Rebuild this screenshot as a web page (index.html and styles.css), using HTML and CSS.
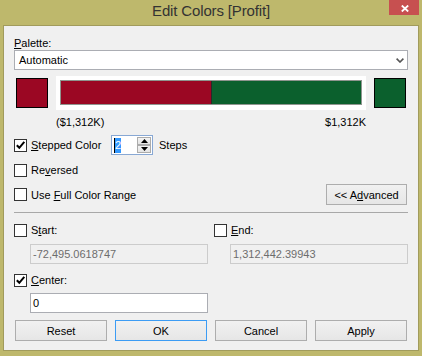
FILE: index.html
```html
<!DOCTYPE html>
<html>
<head>
<meta charset="utf-8">
<link rel="stylesheet" href="styles.css">
</head>
<body>
<div class="window">
  <div class="titlebar">
    <span class="tb-spacer"></span>
    <div class="title">Edit Colors [Profit]</div>
    <div class="tb-right">
      <div class="close">
        <svg width="8" height="7" viewBox="0 0 8 7"><path d="M0.8 0.5 L7.2 6.5 M7.2 0.5 L0.8 6.5" stroke="#fff" stroke-width="1.8" fill="none"/></svg>
      </div>
    </div>
  </div>
  <div class="client">
    <div class="label"><u>P</u>alette:</div>
    <div class="select">
      <span>Automatic</span>
      <svg class="chev" width="8" height="5" viewBox="0 0 8 5"><path d="M0.6 0.6 L4 4 L7.4 0.6" stroke="#555" stroke-width="1.6" fill="none"/></svg>
    </div>
    <div class="color-row">
      <div class="swatch red"></div>
      <div class="bar-wrap">
        <div class="bar"><div class="half red"></div><div class="divider"></div><div class="half green"></div></div>
      </div>
      <div class="swatch green"></div>
    </div>
    <div class="range-labels"><span>($1,312K)</span><span>$1,312K</span></div>
    <div class="row stepped-row">
      <span class="cb checked"><svg width="11" height="11" viewBox="0 0 11 11"><path d="M1.8 5.2 L4.3 7.8 L9.3 1.8" stroke="#000" stroke-width="2" fill="none"/></svg></span>
      <span class="stepped-label"><u>S</u>tepped Color</span>
      <div class="spin">
        <div class="spin-text"><span class="caret"></span><span class="sel">2</span></div>
        <div class="spin-btns">
          <div class="spin-btn"><svg width="7" height="4" viewBox="0 0 7 4"><path d="M0 4 L3.5 0 L7 4 Z" fill="#000"/></svg></div>
          <div class="spin-btn"><svg width="7" height="4" viewBox="0 0 7 4"><path d="M0 0 L3.5 4 L7 0 Z" fill="#000"/></svg></div>
        </div>
      </div>
      <span class="steps">Steps</span>
    </div>
    <div class="row reversed-row">
      <span class="cb"></span><span>Re<u>v</u>ersed</span>
    </div>
    <div class="row full-row">
      <div class="row-left"><span class="cb"></span><span>Use <u>F</u>ull Color Range</span></div>
      <div class="btn adv-btn">&lt;&lt; A<u>d</u>vanced</div>
    </div>
    <div class="separator"></div>
    <div class="range-grid">
      <div class="row cell-row"><span class="cb"></span><span>S<u>t</u>art:</span></div>
      <div class="row cell-row"><span class="cb"></span><span><u>E</u>nd:</span></div>
      <div class="field disabled">-72,495.0618747</div>
      <div class="field disabled">1,312,442.39943</div>
    </div>
    <div class="row center-row">
      <span class="cb checked"><svg width="11" height="11" viewBox="0 0 11 11"><path d="M1.8 5.2 L4.3 7.8 L9.3 1.8" stroke="#000" stroke-width="2" fill="none"/></svg></span>
      <span><u>C</u>enter:</span>
    </div>
    <div class="field center-field">0</div>
    <div class="buttons">
      <div class="btn">Reset</div>
      <div class="btn default">OK</div>
      <div class="btn">Cancel</div>
      <div class="btn">Apply</div>
    </div>
  </div>
</div>
</body>
</html>
```
FILE: styles.css
```css
* { box-sizing: border-box; }
html, body { margin: 0; padding: 0; }
body {
  width: 422px;
  height: 356px;
  overflow: hidden;
  font-family: "Liberation Sans", Arial, sans-serif;
  font-size: 11px;
  color: #000;
}
u { text-decoration: underline; text-underline-offset: 1px; }

.window {
  width: 422px;
  height: 356px;
  background: #BEB86C;
  display: flex;
  flex-direction: column;
  padding: 0 3px 5px 3px;
}

.titlebar {
  height: 25px;
  flex: none;
  display: grid;
  grid-template-columns: 1fr auto 1fr;
  align-items: start;
}
.title {
  font-size: 15px;
  line-height: 22px;
  color: #333;
  white-space: nowrap;
  letter-spacing: -0.15px;
}
.tb-right { display: flex; justify-content: flex-end; }
.close {
  width: 30px;
  height: 15px;
  background: #C75050;
  display: flex;
  align-items: center;
  justify-content: center;
  padding-left: 2px;
  padding-top: 1px;
}
.close svg { display: block; }

.client {
  flex: 1;
  background: #F0F0F0;
  border: 1px solid #A19B5C;
  padding: 11px 10px 9px 10px;
  display: flex;
  flex-direction: column;
}

.label { height: 13px; line-height: 13px; }

.select {
  height: 20px;
  border: 1px solid #ABADB3;
  background: #fff;
  display: flex;
  align-items: center;
  justify-content: space-between;
  padding: 0 3px 0 4px;
}
.chev { display: block; }

.color-row {
  margin-top: 6px;
  height: 34px;
  display: flex;
  align-items: center;
  gap: 8px;
  padding: 0 2px;
}
.swatch {
  width: 32px;
  height: 30px;
  border: 1px solid #000;
  flex: none;
}
.red { background: #9B0723; }
.green { background: #0B602D; }
.bar-wrap {
  flex: 1;
  height: 34px;
  background: #fff;
  padding: 4px 4px 5px 4px;
}
.bar {
  height: 25px;
  border: 1px solid #8F958F;
  display: flex;
}
.half { flex: 1; }
.divider { width: 1px; background: #2a2a2a; }

.range-labels {
  margin-top: 6px;
  height: 13px;
  line-height: 13px;
  display: flex;
  justify-content: space-between;
  padding: 0 42px;
}

.row {
  display: flex;
  align-items: center;
}
.cb {
  width: 13px;
  height: 13px;
  border: 1px solid #333;
  background: #fff;
  flex: none;
  margin-right: 4px;
  display: flex;
  align-items: center;
  justify-content: center;
}
.cb svg { display: block; }

.stepped-row { margin-top: 6px; height: 20px; }
.stepped-label { width: 80px; flex: none; }
.spin {
  width: 42px;
  height: 20px;
  border: 1px solid #88A8D4;
  background: #fff;
  display: flex;
  flex: none;
}
.spin-text {
  flex: 1;
  display: flex;
  align-items: center;
  padding-left: 2px;
}
.caret { width: 1px; height: 15px; background: #000; }
.sel {
  background: #3399FF;
  color: #fff;
  height: 15px;
  line-height: 15px;
  width: 6px;
  text-align: center;
}
.spin-btns {
  width: 16px;
  display: flex;
  flex-direction: column;
  padding: 1px 1px 1px 1px;
  gap: 0;
}
.spin-btn {
  flex: 1;
  border: 1px solid #ACACAC;
  background: linear-gradient(#F4F4F4, #E4E4E4);
  display: flex;
  align-items: center;
  justify-content: center;
}
.spin-btn svg { display: block; }
.steps { margin-left: 6px; }

.reversed-row { margin-top: 5px; height: 20px; }
.full-row {
  margin-top: 4px;
  height: 21px;
  justify-content: space-between;
}
.row-left { display: flex; align-items: center; }

.btn {
  height: 21px;
  border: 1px solid #ADADAD;
  background: linear-gradient(#F1F1F1, #E6E6E6);
  display: flex;
  align-items: center;
  justify-content: center;
  flex: none;
}
.btn.default { border-color: #3C9CF4; }
.adv-btn { width: 81px; margin-right: 1px; }

.separator {
  margin-top: 7px;
  height: 1px;
  background: #A8A8A8;
}

.range-grid {
  margin-top: 7px;
  display: grid;
  grid-template-columns: 194px 194px;
  column-gap: 6px;
  row-gap: 4px;
}
.cell-row { height: 20px; }

.field {
  height: 20px;
  width: 178px;
  margin-left: 16px;
  border: 1px solid #ABADB3;
  background: #fff;
  display: flex;
  align-items: center;
  padding-left: 2px;
}
.field.disabled {
  border-color: #CCCCCC;
  background: #F0F0F0;
  color: #6D6D6D;
}

.center-row { margin-top: 6px; height: 20px; }
.center-field { margin-top: 3px; }

.buttons {
  margin-top: 7px;
  display: flex;
  gap: 8px;
  padding: 0 1px;
}
.buttons .btn { width: 92px; }
```
